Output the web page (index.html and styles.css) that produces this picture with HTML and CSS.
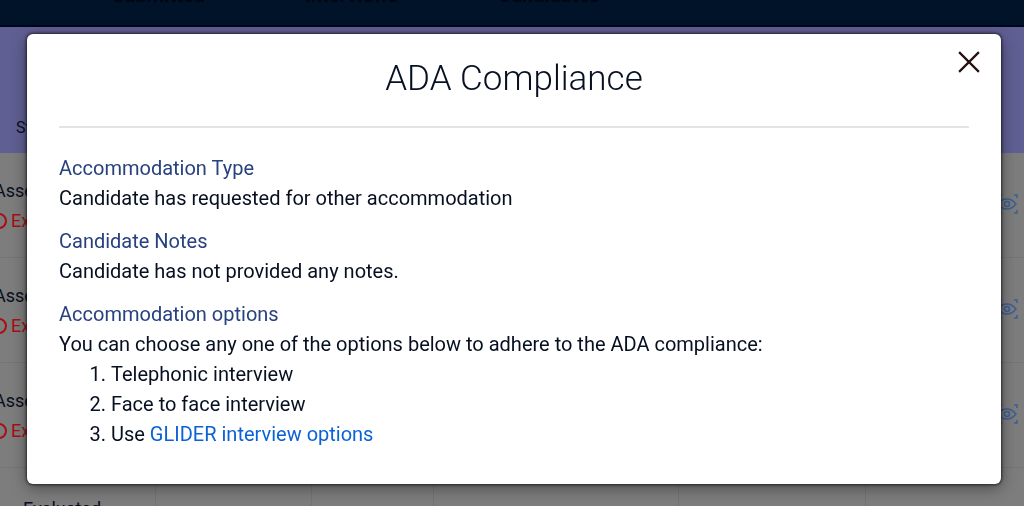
FILE: index.html
```
<!DOCTYPE html>
<html lang="en">
<head>
  <meta charset="UTF-8">
  <meta name="viewport" content="width=device-width, initial-scale=1.0">
  <title>ADA Compliance</title>
  <link rel="stylesheet" href="styles.css">
</head>
<body>
  <svg class="sprite" aria-hidden="true">
    <symbol id="eye" viewBox="0 0 20 20">
      <path d="M16 1h3v3M19 16v3h-3M4 19H1v-3M1 4V1h3"/>
      <path d="M1 10q2-5 8-5 5 0 9 5-4 5-9 5-6 0-8-5z"/>
      <circle cx="9" cy="10" r="2.500"/>
    </symbol>
    <symbol id="alert" viewBox="0 0 16 16">
      <circle cx="8" cy="8" r="7"/>
      <path d="M8 4v5M8 11v1"/>
    </symbol>
  </svg>

  <!-- Page behind the dialog -->
  <div class="page" inert>
    <nav class="navbar">
      <a href="#">Submitted</a>
      <a href="#">Interviews</a>
      <a href="#">Candidates</a>
    </nav>
    <div class="table-head">Status</div>
    <div class="row">
      <div class="status">
        <span>Assessment</span>
        <span class="expired"><svg class="alert"><use href="#alert"/></svg>Expired</span>
      </div>
      <svg class="eye"><use href="#eye"/></svg>
    </div>
    <div class="row">
      <div class="status">
        <span>Assessment</span>
        <span class="expired"><svg class="alert"><use href="#alert"/></svg>Expired</span>
      </div>
      <svg class="eye"><use href="#eye"/></svg>
    </div>
    <div class="row">
      <div class="status">
        <span>Assessment</span>
        <span class="expired"><svg class="alert"><use href="#alert"/></svg>Expired</span>
      </div>
      <svg class="eye"><use href="#eye"/></svg>
    </div>
    <div class="row last">
      <div class="cell">Evaluated</div>
      <div class="cell"></div>
      <div class="cell narrow"></div>
      <div class="cell wide"></div>
      <div class="cell medium"></div>
    </div>
  </div>

  <div class="overlay">
    <div class="modal" role="dialog" aria-modal="true" aria-labelledby="modal-title">
      <button class="close" type="button" aria-label="Close">
        <svg viewBox="0 0 20 20"><path d="M1 1l18 18M19 1L1 19"/></svg>
      </button>
      <h1 id="modal-title">ADA Compliance</h1>
      <section>
        <h2>Accommodation Type</h2>
        <p>Candidate has requested for other accommodation</p>
      </section>
      <section>
        <h2>Candidate Notes</h2>
        <p>Candidate has not provided any notes.</p>
      </section>
      <section>
        <h2>Accommodation options</h2>
        <p>You can choose any one of the options below to adhere to the ADA compliance:</p>
        <ol>
          <li>Telephonic interview</li>
          <li>Face to face interview</li>
          <li>Use <a href="#">GLIDER interview options</a></li>
        </ol>
      </section>
    </div>
  </div>
</body>
</html>
```
FILE: styles.css
```
* {
  box-sizing: border-box;
}
body {
  margin: 0;
  font-family: Roboto, sans-serif;
  font-size: 20px;
  line-height: 30px;
  color: #061021;
}
.sprite {
  display: none;
}
.page {
  height: 100vh;
  overflow: hidden;
  background: #7d7d7d;
  font-size: 18px;
}
.navbar {
  display: flex;
  gap: 100px;
  height: 27px;
  padding-left: 112px;
  background: #001329;
  border-bottom: 2px solid #00061a;
  font-size: 20px;
  line-height: 0;
  overflow: hidden;
}
.navbar a {
  margin-top: -5px;
  color: #000614;
  font-weight: bold;
  text-decoration: none;
}
.table-head {
  height: 126px;
  padding: 86px 16px 0;
  background: #605f93;
  font-size: 16px;
}
.row {
  display: flex;
  justify-content: space-between;
  align-items: center;
  height: 105px;
  padding-top: 2px;
  border-bottom: 1px solid #757575;
}
.status {
  display: flex;
  flex-direction: column;
  margin-left: -6px;
}
.expired {
  display: flex;
  align-items: center;
  gap: 4px;
  margin-left: -3px;
  color: #a80e14;
}
.alert {
  width: 16px;
  height: 16px;
  fill: none;
  stroke: #a80e14;
  stroke-width: 2;
}
.eye {
  width: 20px;
  height: 20px;
  margin: 0 6px 4px 0;
  fill: none;
  stroke: #3c5f94;
  stroke-width: 1.5;
}
.row.last {
  justify-content: flex-start;
  align-items: stretch;
}
.cell {
  flex: 0 0 156px;
  padding: 24px 23px;
  border-right: 1px solid #747474;
}
.cell.narrow {
  flex-basis: 122px;
}
.cell.wide {
  flex-basis: 245px;
}
.cell.medium {
  flex-basis: 187px;
}
.overlay {
  position: fixed;
  inset: 0;
  padding: 34px 23px 0 27px;
}
.modal {
  position: relative;
  padding: 21px 32px 35px;
  background: #fff;
  border-radius: 6px;
  box-shadow: 0 0 3px 1px rgba(0, 0, 0, 0.6), 0 4px 16px rgba(0, 0, 0, 0.4);
}
.close {
  position: absolute;
  top: 12px;
  right: 16px;
  padding: 5px;
  border: none;
  background: none;
  cursor: pointer;
}
.close svg {
  display: block;
  width: 22px;
  height: 22px;
  fill: none;
  stroke: #25100f;
  stroke-width: 2;
}
h1 {
  margin: 0 0 25px;
  padding-bottom: 23px;
  border-bottom: 2px solid #e4e4e4;
  font-size: 35px;
  font-weight: 300;
  line-height: 48px;
  text-align: center;
}
h2 {
  margin: 0;
  font-size: 20px;
  font-weight: normal;
  line-height: 30px;
  color: #27427f;
}
section + section {
  margin-top: 13px;
}
p {
  margin: 0;
}
ol {
  margin: 0;
  padding-left: 52px;
}
ol a {
  color: #0b62d6;
  text-decoration: none;
}
```
